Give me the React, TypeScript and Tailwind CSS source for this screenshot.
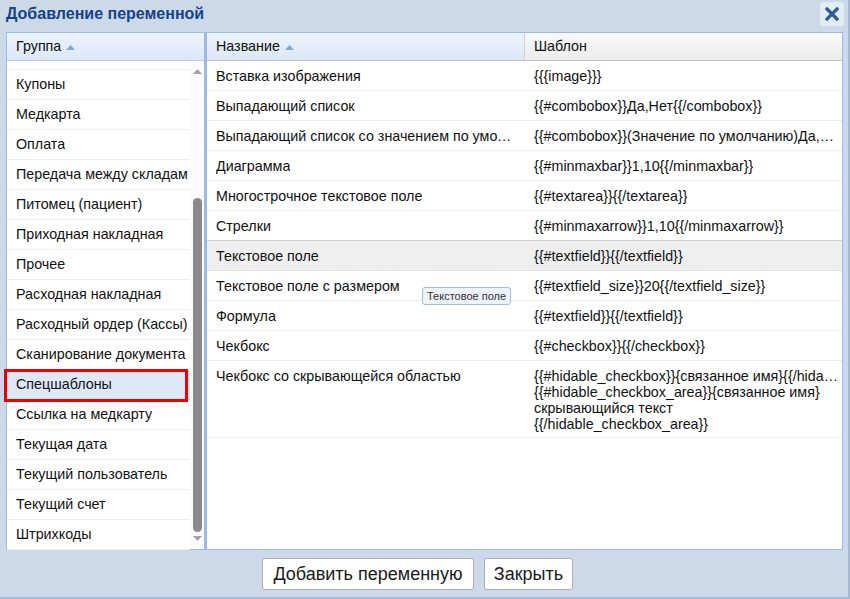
import { useState } from 'react';

const groups = [
  'Купоны',
  'Медкарта',
  'Оплата',
  'Передача между складами',
  'Питомец (пациент)',
  'Приходная накладная',
  'Прочее',
  'Расходная накладная',
  'Расходный ордер (Кассы)',
  'Сканирование документа',
  'Спецшаблоны',
  'Ссылка на медкарту',
  'Текущая дата',
  'Текущий пользователь',
  'Текущий счет',
  'Штрихкоды',
];

const variables: { name: string; tpl: string[] }[] = [
  { name: 'Вставка изображения', tpl: ['{{{image}}}'] },
  { name: 'Выпадающий список', tpl: ['{{#combobox}}Да,Нет{{/combobox}}'] },
  {
    name: 'Выпадающий список со значением по умолчанию',
    tpl: ['{{#combobox}}(Значение по умолчанию)Да,Нет{{/combobox}}'],
  },
  { name: 'Диаграмма', tpl: ['{{#minmaxbar}}1,10{{/minmaxbar}}'] },
  { name: 'Многострочное текстовое поле', tpl: ['{{#textarea}}{{/textarea}}'] },
  { name: 'Стрелки', tpl: ['{{#minmaxarrow}}1,10{{/minmaxarrow}}'] },
  { name: 'Текстовое поле', tpl: ['{{#textfield}}{{/textfield}}'] },
  { name: 'Текстовое поле с размером', tpl: ['{{#textfield_size}}20{{/textfield_size}}'] },
  { name: 'Формула', tpl: ['{{#textfield}}{{/textfield}}'] },
  { name: 'Чекбокс', tpl: ['{{#checkbox}}{{/checkbox}}'] },
  {
    name: 'Чекбокс со скрывающейся областью',
    tpl: [
      '{{#hidable_checkbox}}{связанное имя}{{/hidable_checkbox}}',
      '{{#hidable_checkbox_area}}{связанное имя}',
      'скрывающийся текст',
      '{{/hidable_checkbox_area}}',
    ],
  },
];

function SortUp() {
  return (
    <svg width="9" height="5" viewBox="0 0 9 5" className="ml-[5px] mt-[1px]">
      <path d="M0 5 L4.5 0 L9 5 Z" fill="#7ea6d8" />
    </svg>
  );
}

export default function App() {
  const [selected] = useState('Спецшаблоны');
  const hovered = 'Текстовое поле';

  return (
    <div
      className="relative w-[850px] h-[599px] bg-[#ccd9e8] border-r-2 border-b-2 border-[#a5b9d2] flex flex-col text-[#111] overflow-hidden"
      style={{ fontFamily: '"Liberation Sans", Arial, sans-serif' }}
    >
      {/* title bar */}
      <div className="h-[32px] flex items-center justify-between pl-[6px] pr-[4px] shrink-0">
        <div className="text-[16px] font-bold text-[#15428b] -mt-[4px]">Добавление переменной</div>
        <button className="w-[24px] h-[24px] -mt-[4px] rounded-[3px] bg-[#e3ebf5] flex items-center justify-center">
          <svg width="14" height="14" viewBox="0 0 14 14">
            <path d="M2 2 L12 12 M12 2 L2 12" stroke="#2e5a8f" strokeWidth="3.2" strokeLinecap="square" />
          </svg>
        </button>
      </div>

      {/* panels */}
      <div className="flex h-[518px] pl-[6px] pr-[3px] shrink-0 text-[14.3px]">
        {/* groups panel */}
        <div className="relative z-10 w-[199px] border border-[#99bbe8] bg-white flex flex-col">
          <div className="h-[28px] shrink-0 flex items-center pl-[9px] pt-[1px] bg-gradient-to-b from-[#edf3fb] to-[#dde8f6] border-b border-[#b9cce6]">
            Группа
            <SortUp />
          </div>
          <div className="flex flex-1 min-h-0">
            <div className="flex-1 min-w-0">
              <div className="h-[9px] border-b border-[#ededed]" />
              {groups.map((g) => {
                const sel = g === selected;
                return (
                  <div
                    key={g}
                    className={
                      sel
                        ? 'relative h-[30px] flex items-center pl-[9px] pr-[2px] pt-[1px] bg-[#dfe8f6] border-b border-dotted border-[#a9bcd6]'
                        : 'h-[30px] flex items-center pl-[9px] pr-[2px] pt-[1px] border-b border-[#ededed]'
                    }
                  >
                    <span className="block overflow-hidden whitespace-nowrap">{g}</span>
                    {sel && (
                      <div className="absolute -left-[3px] -top-[1px] w-[184px] h-[33px] border-[3px] border-[#ee0000]" />
                    )}
                  </div>
                );
              })}
            </div>
            {/* scrollbar */}
            <div className="w-[14px] shrink-0 flex flex-col bg-[#fbfbfb]">
              <div className="h-[17px] flex items-end justify-center pb-[4px]">
                <svg width="9" height="5" viewBox="0 0 9 5">
                  <path d="M0 5 L4.5 0 L9 5 Z" fill="#a3a3a3" />
                </svg>
              </div>
              <div className="flex-1 flex flex-col items-center">
                <div className="h-[120px]" />
                <div className="w-[9px] h-[334px] rounded-[5px] bg-[#8a8a8a]" />
              </div>
              <div className="h-[18px] flex items-start justify-center pt-[4px]">
                <svg width="9" height="5" viewBox="0 0 9 5">
                  <path d="M0 0 L9 0 L4.5 5 Z" fill="#a3a3a3" />
                </svg>
              </div>
            </div>
          </div>
        </div>

        {/* variables panel */}
        <div className="w-[638px] border border-[#99bbe8] border-l-2 bg-white flex flex-col">
          <div className="h-[28px] shrink-0 flex border-b border-[#c5c5c5]">
            <div className="w-[318px] flex items-center pl-[9px] pt-[1px] bg-gradient-to-b from-[#edf3fb] to-[#dde8f6] border-r border-[#d0d0d0]">
              Название
              <SortUp />
            </div>
            <div className="flex-1 flex items-center pl-[9px] pt-[1px] bg-gradient-to-b from-[#f9f9f9] to-[#ececec]">
              Шаблон
            </div>
          </div>
          {variables.map((v) => {
            const hov = v.name === hovered;
            const multi = v.tpl.length > 1;
            return (
              <div
                key={v.name}
                className={
                  hov
                    ? 'flex bg-[#efefef] border-t border-[#d3d3d3] border-b border-b-[#e2e2e2] -mt-[1px]'
                    : 'flex border-b border-[#ededed]'
                }
              >
                <div
                  className={
                    multi
                      ? 'w-[318px] pl-[9px] pr-[6px] pt-[7px] truncate leading-[16px]'
                      : 'w-[318px] h-[29px] flex items-center pl-[9px] pr-[6px] pt-[2px] min-w-0'
                  }
                >
                  <span className="truncate">{v.name}</span>
                </div>
                <div
                  className={
                    multi
                      ? 'flex-1 min-w-0 pl-[9px] pr-[4px] pt-[7px] pb-[5px] leading-[16px]'
                      : 'flex-1 min-w-0 h-[29px] flex items-center pl-[9px] pr-[4px] pt-[2px]'
                  }
                >
                  {multi ? (
                    v.tpl.map((t, i) => (
                      <div key={i} className="truncate">
                        {t}
                      </div>
                    ))
                  ) : (
                    <span className="truncate">{v.tpl[0]}</span>
                  )}
                </div>
              </div>
            );
          })}
        </div>
      </div>

      {/* buttons */}
      <div className="flex-1 flex items-center justify-center gap-[10px] pr-[13px] pt-[1px]">
        <button className="w-[212px] h-[32px] bg-white border border-[#b0b0b0] rounded-[3px] text-[18px] text-[#1a1a1a]">
          Добавить переменную
        </button>
        <button className="w-[89px] h-[32px] bg-white border border-[#b0b0b0] rounded-[3px] text-[18px] text-[#1a1a1a]">
          Закрыть
        </button>
      </div>

      {/* tooltip */}
      <div className="absolute z-20 left-[422px] top-[287px] h-[18px] px-[4px] flex items-center text-[11px] text-[#333] bg-[#eef3fa] border border-[#a7bfdd] rounded-[3px] whitespace-nowrap">
        Текстовое поле
      </div>
    </div>
  );
}
